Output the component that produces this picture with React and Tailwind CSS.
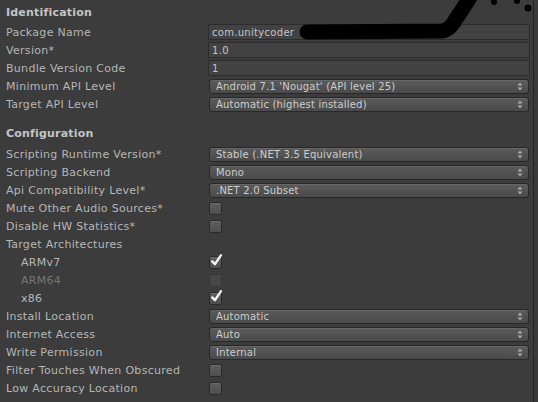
import React from 'react';

const font = "font-['DejaVu_Sans','Liberation_Sans',sans-serif]";

function Header({ children, className = '' }) {
    return (
        <div className={`h-[18px] flex items-center pl-[6px] text-[11px] font-bold tracking-[0.2px] text-[#c4c4c4] ${className}`}>
            {children}
        </div>
    );
}

function Row({ label, sub, disabled, children }) {
    return (
        <div className="h-[18px] flex items-center">
            <div
                className={`w-[208px] shrink-0 pt-[2px] text-[11px] tracking-[0.3px] whitespace-nowrap ${sub ? 'pl-[21px]' : 'pl-[6px]'} ${disabled ? 'text-[#767676]' : 'text-[#b6b6b6]'}`}
            >
                {label}
            </div>
            <div className="flex-1 flex items-center">{children}</div>
        </div>
    );
}

function TextField({ value }) {
    return (
        <div className="w-full h-[16px] flex items-center pt-[1px] px-[3px] bg-[#424242] border border-[#2c2c2c] text-[10px] tracking-[0.3px] text-[#c4c4c4]">
            {value}
        </div>
    );
}

function Popup({ value }) {
    return (
        <div className="mx-[1px] w-full h-[15px] flex items-center justify-between pl-[6px] pr-[5px] rounded-[3px] border border-[#282828] bg-gradient-to-b from-[#5b5b5b] to-[#4a4a4a] shadow-[inset_0_1px_0_#676767] text-[10px] tracking-[0.2px] text-[#cdcdcd]">
            <span className="whitespace-nowrap">{value}</span>
            <svg width="6" height="9" viewBox="0 0 6 9" className="shrink-0">
                <path d="M3 0.5 L5.5 3.5 L0.5 3.5 Z" fill="#a9a9a9" />
                <path d="M0.5 5.5 L5.5 5.5 L3 8.5 Z" fill="#a9a9a9" />
            </svg>
        </div>
    );
}

function Checkbox({ checked, disabled }) {
    return (
        <div
            className={`relative ml-[1px] w-[13px] h-[13px] rounded-[2px] border ${disabled ? 'border-[#363636] bg-[#474747]' : 'border-[#2a2a2a] bg-gradient-to-b from-[#5f5f5f] to-[#4e4e4e] shadow-[inset_0_1px_0_#6a6a6a]'}`}
        >
            {checked && (
                <svg width="14" height="14" viewBox="0 0 14 14" className="absolute -top-[4px] left-[0px]">
                    <path d="M2.2 8.4 L5 11.2 L11 2.2" fill="none" stroke="#f4f4f4" strokeWidth="2.4" strokeLinecap="round" strokeLinejoin="round" />
                </svg>
            )}
        </div>
    );
}

export default function App() {
    return (
        <div className={`relative w-[538px] h-[402px] overflow-hidden flex bg-[#3c3c3c] ${font}`}>
            <div className="flex-1 pt-[4px] pr-[3px]">
                <Header className="mb-[1px]">Identification</Header>
                <Row label="Package Name"><TextField value="com.unitycoder" /></Row>
                <Row label="Version*"><TextField value="1.0" /></Row>
                <Row label="Bundle Version Code"><TextField value="1" /></Row>
                <Row label="Minimum API Level"><Popup value="Android 7.1 'Nougat' (API level 25)" /></Row>
                <Row label="Target API Level"><Popup value="Automatic (highest installed)" /></Row>

                <Header className="mt-[12px] mb-[2px]">Configuration</Header>
                <Row label="Scripting Runtime Version*"><Popup value="Stable (.NET 3.5 Equivalent)" /></Row>
                <Row label="Scripting Backend"><Popup value="Mono" /></Row>
                <Row label="Api Compatibility Level*"><Popup value=".NET 2.0 Subset" /></Row>
                <Row label="Mute Other Audio Sources*"><Checkbox /></Row>
                <Row label="Disable HW Statistics*"><Checkbox /></Row>
                <Row label="Target Architectures" />
                <Row label="ARMv7" sub><Checkbox checked /></Row>
                <Row label="ARM64" sub disabled><Checkbox disabled /></Row>
                <Row label="x86" sub><Checkbox checked /></Row>
                <Row label="Install Location"><Popup value="Automatic" /></Row>
                <Row label="Internet Access"><Popup value="Auto" /></Row>
                <Row label="Write Permission"><Popup value="Internal" /></Row>
                <Row label="Filter Touches When Obscured"><Checkbox /></Row>
                <Row label="Low Accuracy Location"><Checkbox /></Row>
            </div>
            <div className="w-[5px] shrink-0 border-l border-[#242424] bg-[#3a3a3a]" />

            {/* redaction scribble over the package name */}
            <svg className="absolute inset-0 pointer-events-none" width="538" height="402" viewBox="0 0 538 402">
                <path
                    d="M307 32 L442 31 C448 30 451 27 456 19 L471 -4"
                    fill="none"
                    stroke="#000"
                    strokeWidth="15"
                    strokeLinecap="round"
                    strokeLinejoin="round"
                />
                <circle cx="494" cy="2" r="3" fill="#000" />
                <circle cx="517" cy="1" r="3" fill="#000" />
                <circle cx="528" cy="8" r="3.5" fill="#000" />
            </svg>
        </div>
    );
}
